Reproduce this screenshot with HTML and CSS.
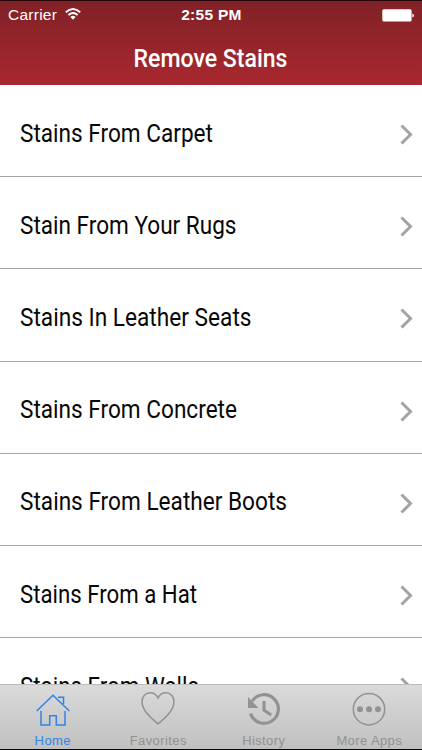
FILE: index.html
```html
<!DOCTYPE html>
<html lang="en">
<head>
<meta charset="utf-8">
<title>Remove Stains</title>
<link rel="stylesheet" href="styles.css">
</head>
<body>
<div class="app">
  <header class="header">
    <div class="status">
      <div class="carrier"><span class="carrier-name">Carrier</span>
        <svg class="wifi" width="16" height="12" viewBox="0 0 16 12"><g fill="none" stroke="#fff" stroke-width="1.9"><path d="M.8 4.3Q8-2.3 15.200 4.300"/><path d="M3.400 7Q8 2.800 12.600 7"/></g><path d="M5.400 8.900Q8 6.500 10.600 8.900L8 11.700Z" fill="#fff"/></svg>
      </div>
      <div class="time">2:55 PM</div>
      <svg class="battery" width="33" height="13" viewBox="0 0 33 13"><rect x=".3" y=".3" width="29.300" height="12.200" rx="1.500" fill="#fff"/><path d="M30.300 4.500Q32 5 32 6.500T30.300 8.500Z" fill="#fff"/></svg>
    </div>
    <svg class="title" viewBox="0 0 422 50" width="422" height="50"><text x="133.500" y="32" textLength="154" lengthAdjust="spacingAndGlyphs">Remove Stains</text></svg>
  </header>
  <main class="list">
    <div class="row"><svg class="label" width="380" height="40"><text x="20" y="28" textLength="193" lengthAdjust="spacingAndGlyphs">Stains From Carpet</text></svg><svg class="chevron" width="13" height="21" viewBox="0 0 13 21"><path d="M1.500 1.500L10.500 10.500L1.500 19.500"/></svg></div>
    <div class="row"><svg class="label" width="380" height="40"><text x="20" y="28" textLength="216.500" lengthAdjust="spacingAndGlyphs">Stain From Your Rugs</text></svg><svg class="chevron" width="13" height="21" viewBox="0 0 13 21"><path d="M1.500 1.500L10.500 10.500L1.500 19.500"/></svg></div>
    <div class="row"><svg class="label" width="380" height="40"><text x="20" y="28" textLength="231.500" lengthAdjust="spacingAndGlyphs">Stains In Leather Seats</text></svg><svg class="chevron" width="13" height="21" viewBox="0 0 13 21"><path d="M1.500 1.500L10.500 10.500L1.500 19.500"/></svg></div>
    <div class="row"><svg class="label" width="380" height="40"><text x="20" y="28" textLength="217" lengthAdjust="spacingAndGlyphs">Stains From Concrete</text></svg><svg class="chevron" width="13" height="21" viewBox="0 0 13 21"><path d="M1.500 1.500L10.500 10.500L1.500 19.500"/></svg></div>
    <div class="row"><svg class="label" width="380" height="40"><text x="20" y="28" textLength="267" lengthAdjust="spacingAndGlyphs">Stains From Leather Boots</text></svg><svg class="chevron" width="13" height="21" viewBox="0 0 13 21"><path d="M1.500 1.500L10.500 10.500L1.500 19.500"/></svg></div>
    <div class="row"><svg class="label" width="380" height="40"><text x="20" y="28" textLength="177" lengthAdjust="spacingAndGlyphs">Stains From a Hat</text></svg><svg class="chevron" width="13" height="21" viewBox="0 0 13 21"><path d="M1.500 1.500L10.500 10.500L1.500 19.500"/></svg></div>
    <div class="row"><svg class="label" width="380" height="40"><text x="20" y="28" textLength="179" lengthAdjust="spacingAndGlyphs">Stains From Walls</text></svg><svg class="chevron" width="13" height="21" viewBox="0 0 13 21"><path d="M1.500 1.500L10.500 10.500L1.500 19.500"/></svg></div>
  </main>
  <nav class="tabs">
    <div class="tab active"><svg width="36" height="36" viewBox="0 0 36 36"><path d="M1.700 20L18 4.200L34.300 20M6 20V34H14.700V24.700H21.300V34H30V20M23 6.300H28.500V13"/></svg><span>Home</span></div>
    <div class="tab"><svg width="36" height="36" viewBox="0 0 36 36"><path d="M18 33C13 28.500 2 20.500 2 10.500C2 5.500 5.500 1.700 10 1.700C13.500 1.700 16.500 3.500 18 7C19.500 3.500 22.500 1.700 26 1.700C30.500 1.700 34 5.500 34 10.500C34 20.500 23 28.500 18 33Z"/></svg><span>Favorites</span></div>
    <div class="tab"><svg width="36" height="36" viewBox="0 0 36 36"><g stroke-width="3.200"><path d="M6.100 10.200A14.300 14.300 0 1 1 4.500 22.500"/><path d="M18 10V19.300L25.200 23.900" stroke-width="3"/></g><path class="fill" d="M2 6V17H12.500Z"/></svg><span>History</span></div>
    <div class="tab"><svg width="36" height="36" viewBox="0 0 36 36"><circle cx="18" cy="18.200" r="15.700"/><g class="fill"><circle cx="9" cy="18.200" r="3"/><circle cx="18" cy="18.200" r="3"/><circle cx="27" cy="18.200" r="3"/></g></svg><span>More Apps</span></div>
  </nav>
</div>
</body>
</html>
```
FILE: styles.css
```css
body {
  margin: 0;
  background: #fff;
  font-family: "Liberation Sans", Arial, sans-serif;
}
.app {
  width: 422px;
  height: 750px;
  overflow: hidden;
  display: flex;
  flex-direction: column;
}
.header {
  flex: none;
  box-sizing: border-box;
  height: 85px;
  border-top: 1px solid #26060a;
  background: linear-gradient(#802126, #a9282f);
  color: #fff;
}
.status {
  height: 28px;
  display: grid;
  grid-template-columns: 1fr auto 1fr;
  align-items: center;
  padding: 0 7px 0 8px;
}
.carrier {
  display: flex;
  align-items: center;
  gap: 8px;
  font-size: 15.5px;
  letter-spacing: .25px;
}
.wifi {
  margin-top: -2px;
}
.time {
  font-size: 15.5px;
  font-weight: bold;
  letter-spacing: .3px;
}
.battery {
  justify-self: end;
}
.title {
  display: block;
  margin-top: 6px;
  fill: #fff;
  font: 500 26.5px Roboto, sans-serif;
}
.list {
  flex: 1;
  min-height: 0;
  overflow: hidden;
}
.row {
  box-sizing: border-box;
  height: 92.2px;
  display: flex;
  align-items: center;
  justify-content: space-between;
  padding: 6px 9px 0 0;
  border-bottom: 1px solid #a4a4a4;
}
.label {
  fill: #080808;
  font: 26.5px Roboto, sans-serif;
}
.chevron {
  margin-top: 2px;
  fill: none;
  stroke: #a3a3a3;
  stroke-width: 3px;
}
.tabs {
  flex: none;
  box-sizing: border-box;
  height: 66px;
  display: grid;
  grid-template-columns: repeat(4, 1fr);
  border-top: 1px solid #bdbdbd;
  border-bottom: 1px solid #080808;
  background: linear-gradient(#dadada, #c0c0c0);
}
.tab {
  display: flex;
  flex-direction: column;
  align-items: center;
  padding-top: 6px;
  color: #929292;
  font-size: 13px;
  line-height: 15px;
  letter-spacing: .4px;
}
.tab svg {
  flex: none;
  fill: none;
  stroke: currentColor;
  stroke-width: 1.5px;
}
.tab .fill {
  fill: currentColor;
  stroke: none;
}
.tab span {
  margin-top: 6px;
}
.active {
  color: #2d84ea;
}
```
